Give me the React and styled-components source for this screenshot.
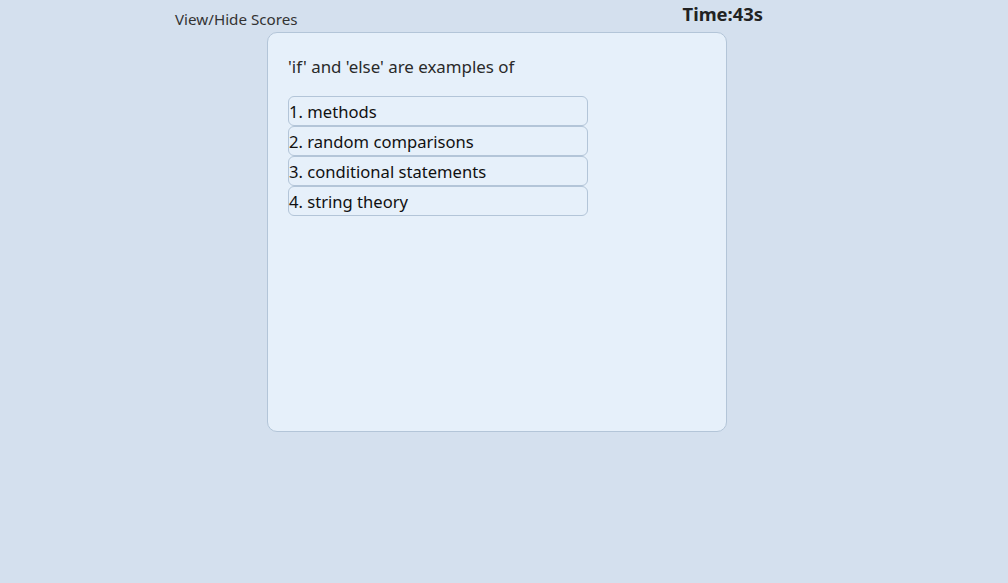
import React from 'react'
import styled, { createGlobalStyle } from 'styled-components'

const GlobalStyle = createGlobalStyle`
  html, body {
    margin: 0;
    padding: 0;
    background: #d4e0ee;
    font-family: "Noto Sans", "Open Sans", sans-serif;
    color: #222;
  }
`

const Page = styled.div`
  min-height: 583px;
  padding-left: 175px;
  padding-top: 1px;
  box-sizing: border-box;
`

const TopBar = styled.div`
  width: 588px;
  display: flex;
  justify-content: space-between;
  align-items: flex-start;
  height: 31px;
`

const ScoresToggle = styled.button`
  background: none;
  border: none;
  padding: 0;
  margin-top: 8px;
  font-family: inherit;
  font-size: 15.2px;
  color: #333;
  cursor: pointer;
`

const Timer = styled.div`
  font-size: 18.4px;
  font-weight: 700;
  color: #222;
`

const Card = styled.div`
  margin-left: 92px;
  width: 460px;
  height: 400px;
  box-sizing: border-box;
  background: #e6f0fa;
  border: 1px solid #b3c5d8;
  border-radius: 10px;
  padding: 22px 20px;
`

const Question = styled.div`
  font-size: 16.9px;
  color: #2a2a2a;
  margin-bottom: 18px;
`

const Options = styled.div`
  display: flex;
  flex-direction: column;
  width: 300px;
`

const Option = styled.button`
  height: 30px;
  box-sizing: border-box;
  text-align: left;
  padding: 0;
  background: #e6f0fa;
  border: 1px solid #b3c5d8;
  border-radius: 6px;
  font-family: inherit;
  font-size: 16.6px;
  color: #111;
  cursor: pointer;
`

const answers = ['methods', 'random comparisons', 'conditional statements', 'string theory']

export default function App() {
  return (
    <Page>
      <GlobalStyle />
      <TopBar>
        <ScoresToggle>View/Hide Scores</ScoresToggle>
        <Timer>Time:43s</Timer>
      </TopBar>
      <Card>
        <Question>'if' and 'else' are examples of</Question>
        <Options>
          {answers.map((a, i) => (
            <Option key={a}>{i + 1}. {a}</Option>
          ))}
        </Options>
      </Card>
    </Page>
  )
}
